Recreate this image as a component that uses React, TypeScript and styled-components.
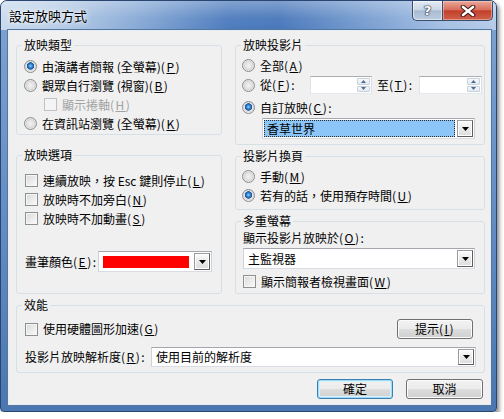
import React from "react";
import styled, { createGlobalStyle, css } from "styled-components";

const FONT = `"Noto Sans CJK TC", "Noto Sans CJK SC", sans-serif`;

const GlobalStyle = createGlobalStyle`
  html, body { margin: 0; padding: 0; background: #ffffff; }
  body { font-family: ${FONT}; font-size: 12px; color: #000; }
  *, *::before, *::after { box-sizing: border-box; }
`;

const Window = styled.div`
  width: 497px;
  height: 412px;
  display: flex;
  flex-direction: column;
  border: 1px solid #2a4670;
  border-radius: 7px 7px 4px 4px;
  overflow: hidden;
  background: linear-gradient(180deg, #7fa4d2 0%, #6790c6 45%, #4a77b1 100%);
  box-shadow: 2px 3px 4px rgba(0, 0, 0, 0.5);
`;

const TitleBar = styled.div`
  height: 29px;
  flex: none;
  display: flex;
  justify-content: space-between;
  align-items: flex-start;
  padding: 0 3px 0 8px;
  background:
    linear-gradient(180deg, rgba(255, 255, 255, 0.3) 0%, rgba(255, 255, 255, 0.05) 60%, rgba(255, 255, 255, 0) 100%),
    linear-gradient(90deg, #c9daed 0%, #b6cce6 12%, #86a8d5 28%, #4c7bbd 46%, #4877ba 56%, #7ea2d3 76%, #a6c1e4 90%, #b5cbe8 100%);
`;

const Title = styled.div`
  margin-top: 7px;
  font-size: 13px;
  line-height: 16px;
  color: #000;
  text-shadow: 0 0 6px #fff, 0 0 3px #fff;
`;

const CaptionGroup = styled.div`
  display: flex;
`;

const CaptionButton = styled.div<{ $kind: "help" | "close" }>`
  height: 20px;
  display: flex;
  align-items: center;
  justify-content: center;
  border: 1px solid #3a4e6b;
  border-top: none;
  ${(p) =>
    p.$kind === "help"
      ? css`
          width: 30px;
          border-right: none;
          border-radius: 0 0 0 5px;
          background: linear-gradient(180deg, #e4ebf4 0%, #cbd7e6 45%, #a9bbd3 52%, #bccde2 100%);
          box-shadow: inset 0 0 0 1px rgba(255, 255, 255, 0.5);
        `
      : css`
          width: 51px;
          border-radius: 0 0 5px 0;
          background: linear-gradient(180deg, #eaa99b 0%, #d9705f 45%, #c3402b 52%, #d1614b 100%);
          box-shadow: inset 0 0 0 1px rgba(255, 220, 210, 0.45);
        `}
`;

const HelpGlyph = styled.span`
  font-family: "DejaVu Sans", sans-serif;
  font-weight: bold;
  font-size: 13px;
  line-height: 13px;
  color: #fff;
  text-shadow: 0 0 1px #1b2c46, 0 0 1px #1b2c46, 0 0 2px #1b2c46;
`;

const Client = styled.div`
  flex: 1;
  margin: 0 5px 6px 7px;
  background: #f0f0f0;
  border: 1px solid #e6edf5;
  box-shadow: 0 0 0 1px #54779f;
  display: flex;
  flex-direction: column;
  padding: 7px 5px 0 7px;
`;

const Columns = styled.div`
  display: grid;
  grid-template-columns: 206px 250px;
  column-gap: 13px;
`;

const Column = styled.div<{ $gap: number }>`
  display: flex;
  flex-direction: column;
  gap: ${(p) => p.$gap}px;
`;

const Group = styled.fieldset<{ $h: number; $mt?: number }>`
  margin: ${(p) => p.$mt ?? 0}px 0 0 0;
  padding: 0;
  min-width: 0;
  height: ${(p) => p.$h}px;
  border: 1px solid #d5dfe5;
  border-radius: 3px;
`;

const Legend = styled.legend`
  padding: 0 2px;
  margin-left: 5px;
  font-size: 12px;
  line-height: 14px;
`;

const Body = styled.div<{ $pad: string }>`
  padding: ${(p) => p.$pad};
  display: flex;
  flex-direction: column;
`;

const Row = styled.div<{ $h: number; $mt?: number; $indent?: number; $between?: boolean }>`
  display: flex;
  align-items: center;
  gap: 5px;
  height: ${(p) => p.$h}px;
  margin-top: ${(p) => p.$mt ?? 0}px;
  margin-left: ${(p) => p.$indent ?? 0}px;
  justify-content: ${(p) => (p.$between ? "space-between" : "flex-start")};
  white-space: nowrap;
`;

const Item = styled.span`
  display: flex;
  align-items: center;
  gap: 5px;
`;

const Radio = styled.span<{ $checked?: boolean }>`
  flex: none;
  width: 13px;
  height: 13px;
  border-radius: 50%;
  border: 1px solid #8b8c8c;
  background: ${(p) =>
    p.$checked
      ? "radial-gradient(circle at 50% 45%, #9fd4fb 0, #3b8edb 1.6px, #1b5597 3.4px, #e9e9e9 4px, #d6d6d6 5px, #f7f7f7 6px)"
      : "radial-gradient(circle at 50% 50%, #f2f2f2 0, #e4e4e4 3px, #d7d7d7 4.5px, #f8f8f8 6px)"};
`;

const Check = styled.span<{ $disabled?: boolean }>`
  flex: none;
  width: 13px;
  height: 13px;
  border: 1px solid ${(p) => (p.$disabled ? "#c1c1c1" : "#8e8f8f")};
  background: ${(p) =>
    p.$disabled
      ? "#f4f4f4"
      : "linear-gradient(135deg, #d8d8d8 0%, #ececec 55%, #fbfbfb 100%)"};
  box-shadow: inset 0 0 0 1px ${(p) => (p.$disabled ? "#f4f4f4" : "#f6f6f6")};
`;

const Text = styled.span<{ $disabled?: boolean; $w?: number }>`
  font-size: 12px;
  line-height: 14px;
  color: ${(p) => (p.$disabled ? "#a3a3a3" : "#000")};
  ${(p) => (p.$w ? `width: ${p.$w}px; flex: none;` : "")}
`;

const KeyWrap = styled.span`
  letter-spacing: 1.5px;
`;

const KeyLetter = styled.u`
  text-underline-offset: 1px;
`;

const Key = ({ k }: { k: string }) => (
  <KeyWrap>
    (<KeyLetter>{k}</KeyLetter>)
  </KeyWrap>
);

const SpinBox = styled.div<{ $w: number }>`
  flex: none;
  width: ${(p) => p.$w}px;
  height: 18px;
  background: #fff;
  border: 1px solid #abadb3;
  border-color: #abadb3 #dbdfe6 #e3e9ef #e2e3ea;
  display: flex;
  justify-content: flex-end;
  padding: 1px;
`;

const SpinColumn = styled.div`
  width: 13px;
  display: flex;
  flex-direction: column;
  gap: 1px;
`;

const SpinHalf = styled.div`
  flex: 1;
  display: flex;
  align-items: center;
  justify-content: center;
  border: 1px solid #c6d2de;
  border-radius: 1px;
  background: linear-gradient(180deg, #f7f9fb 0%, #e4e9ef 100%);
`;

const Combo = styled.div<{ $w?: number; $mr?: number; $h?: number }>`
  ${(p) => (p.$w ? `width: ${p.$w}px; flex: none;` : "flex: 1;")}
  height: ${(p) => p.$h ?? 21}px;
  margin-right: ${(p) => p.$mr ?? 0}px;
  background: #fff;
  border: 1px solid #abadb3;
  border-color: #a3a6ad #cfd3d9 #d9dde3 #cfd3d9;
  display: flex;
  align-items: stretch;
  justify-content: space-between;
  padding: 1px;
`;

const ComboValue = styled.div<{ $selected?: boolean }>`
  flex: 1;
  display: flex;
  align-items: center;
  padding-left: 3px;
  margin-right: 2px;
  font-size: 12px;
  line-height: 14px;
  ${(p) =>
    p.$selected &&
    css`
      background: #8cc5f8;
      outline: 1px dotted #2a2a2a;
      outline-offset: -1px;
    `}
`;

const Swatch = styled.div`
  width: 86px;
  align-self: center;
  height: 12px;
  margin-left: 3px;
  background: #ff0000;
`;

const DropButton = styled.div`
  flex: none;
  width: 16px;
  display: flex;
  align-items: center;
  justify-content: center;
  border: 1px solid #767676;
  border-color: #9a9a9a #5e5e5e #5e5e5e #9a9a9a;
  background: linear-gradient(180deg, #fbfbfb 0%, #eaeaea 50%, #dcdcdc 100%);
  box-shadow: inset 0 0 0 1px #ffffff;
`;

const PushButton = styled.button<{ $w: number; $default?: boolean }>`
  width: ${(p) => p.$w}px;
  height: 20px;
  padding: 0;
  font-family: ${FONT};
  font-size: 12px;
  line-height: 14px;
  color: #000;
  border-radius: 3px;
  border: 1px solid ${(p) => (p.$default ? "#3c7fb1" : "#707070")};
  background: linear-gradient(180deg, #f2f2f2 0%, #ebebeb 49%, #dddddd 51%, #cfcfcf 100%);
  box-shadow: ${(p) =>
    p.$default
      ? "inset 0 0 0 1px #9fdcfb, inset 0 0 0 2px #d8f0fc"
      : "inset 0 0 0 1px #fcfcfc"};
`;

const ButtonRow = styled.div`
  display: flex;
  justify-content: flex-end;
  gap: 13px;
  margin-top: 6px;
  padding-right: 2px;
`;

const DownArrow = () => (
  <svg width="7" height="4" viewBox="0 0 7 4">
    <path d="M0 0 H7 L3.5 4 Z" fill="#000" />
  </svg>
);

const SpinArrow = ({ up }: { up?: boolean }) => (
  <svg width="5" height="3" viewBox="0 0 5 3">
    <path d={up ? "M0 3 H5 L2.5 0 Z" : "M0 0 H5 L2.5 3 Z"} fill="#4c6c96" />
  </svg>
);

const Spin = ({ w }: { w: number }) => (
  <SpinBox $w={w}>
    <SpinColumn>
      <SpinHalf>
        <SpinArrow up />
      </SpinHalf>
      <SpinHalf>
        <SpinArrow />
      </SpinHalf>
    </SpinColumn>
  </SpinBox>
);

const CloseGlyph = () => (
  <svg width="16" height="12" viewBox="0 0 16 12">
    <path d="M3 2 L13 10 M13 2 L3 10" stroke="#3a1a16" strokeWidth="4.6" strokeLinecap="round" />
    <path d="M3 2 L13 10 M13 2 L3 10" stroke="#ffffff" strokeWidth="2.6" strokeLinecap="round" />
  </svg>
);

export default function App() {
  return (
    <>
      <GlobalStyle />
      <Window>
        <TitleBar>
          <Title>設定放映方式</Title>
          <CaptionGroup>
            <CaptionButton $kind="help">
              <HelpGlyph>?</HelpGlyph>
            </CaptionButton>
            <CaptionButton $kind="close">
              <CloseGlyph />
            </CaptionButton>
          </CaptionGroup>
        </TitleBar>
        <Client>
          <Columns>
            <Column $gap={13}>
              <Group $h={97}>
                <Legend>放映類型</Legend>
                <Body $pad="5px 0 0 7px">
                  <Row $h={19}>
                    <Radio $checked />
                    <Text>
                      由演講者簡報 (全螢幕)<Key k="P" />
                    </Text>
                  </Row>
                  <Row $h={19}>
                    <Radio />
                    <Text>
                      觀眾自行瀏覽 (視窗)<Key k="B" />
                    </Text>
                  </Row>
                  <Row $h={19} $indent={20}>
                    <Check $disabled />
                    <Text $disabled>
                      顯示捲軸<Key k="H" />
                    </Text>
                  </Row>
                  <Row $h={19}>
                    <Radio />
                    <Text>
                      在資訊站瀏覽 (全螢幕)<Key k="K" />
                    </Text>
                  </Row>
                </Body>
              </Group>
              <Group $h={146}>
                <Legend>放映選項</Legend>
                <Body $pad="9px 0 0 8px">
                  <Row $h={19}>
                    <Check />
                    <Text>
                      連續放映，按 Esc 鍵則停止<Key k="L" />
                    </Text>
                  </Row>
                  <Row $h={19}>
                    <Check />
                    <Text>
                      放映時不加旁白<Key k="N" />
                    </Text>
                  </Row>
                  <Row $h={19}>
                    <Check />
                    <Text>
                      放映時不加動畫<Key k="S" />
                    </Text>
                  </Row>
                  <Row $h={21} $mt={23}>
                    <Text $w={68}>
                      畫筆顏色<Key k="E" />:
                    </Text>
                    <Combo $w={114}>
                      <Swatch />
                      <DropButton>
                        <DownArrow />
                      </DropButton>
                    </Combo>
                  </Row>
                </Body>
              </Group>
            </Column>
            <Column $gap={4}>
              <Group $h={107}>
                <Legend>放映投影片</Legend>
                <Body $pad="4px 0 0 6px">
                  <Row $h={19}>
                    <Radio />
                    <Text>
                      全部<Key k="A" />
                    </Text>
                  </Row>
                  <Row $h={20}>
                    <Radio />
                    <Text $w={45}>
                      從<Key k="F" />:
                    </Text>
                    <Spin w={62} />
                    <Text $w={37}>
                      至<Key k="T" />:
                    </Text>
                    <Spin w={63} />
                  </Row>
                  <Row $h={19} $mt={3}>
                    <Radio $checked />
                    <Text>
                      自訂放映<Key k="C" />:
                    </Text>
                  </Row>
                  <Row $h={21} $mt={1} $indent={20}>
                    <Combo $w={213}>
                      <ComboValue $selected>香草世界</ComboValue>
                      <DropButton>
                        <DownArrow />
                      </DropButton>
                    </Combo>
                  </Row>
                </Body>
              </Group>
              <Group $h={61}>
                <Legend>投影片換頁</Legend>
                <Body $pad="4px 0 0 6px">
                  <Row $h={19}>
                    <Radio />
                    <Text>
                      手動<Key k="M" />
                    </Text>
                  </Row>
                  <Row $h={19}>
                    <Radio $checked />
                    <Text>
                      若有的話，使用預存時間<Key k="U" />
                    </Text>
                  </Row>
                </Body>
              </Group>
              <Group $h={80}>
                <Legend>多重螢幕</Legend>
                <Body $pad="1px 0 0 7px">
                  <Row $h={18}>
                    <Text>
                      顯示投影片放映於<Key k="O" />:
                    </Text>
                  </Row>
                  <Row $h={21} $mt={1}>
                    <Combo $w={232}>
                      <ComboValue>主監視器</ComboValue>
                      <DropButton>
                        <DownArrow />
                      </DropButton>
                    </Combo>
                  </Row>
                  <Row $h={19} $mt={3}>
                    <Check />
                    <Text>
                      顯示簡報者檢視畫面<Key k="W" />
                    </Text>
                  </Row>
                </Body>
              </Group>
            </Column>
          </Columns>
          <Group $h={75} $mt={4}>
            <Legend>效能</Legend>
            <Body $pad="7px 11px 0 8px">
              <Row $h={20} $between>
                <Item>
                  <Check />
                  <Text>
                    使用硬體圖形加速<Key k="G" />
                  </Text>
                </Item>
                <PushButton $w={76}>
                  提示<Key k="I" />
                </PushButton>
              </Row>
              <Row $h={20} $mt={8}>
                <Text $w={121}>
                  投影片放映解析度<Key k="R" />:
                </Text>
                <Combo $mr={-3} $h={20}>
                  <ComboValue>使用目前的解析度</ComboValue>
                  <DropButton>
                    <DownArrow />
                  </DropButton>
                </Combo>
              </Row>
            </Body>
          </Group>
          <ButtonRow>
            <PushButton $w={76} $default>
              確定
            </PushButton>
            <PushButton $w={77}>取消</PushButton>
          </ButtonRow>
        </Client>
      </Window>
    </>
  );
}
